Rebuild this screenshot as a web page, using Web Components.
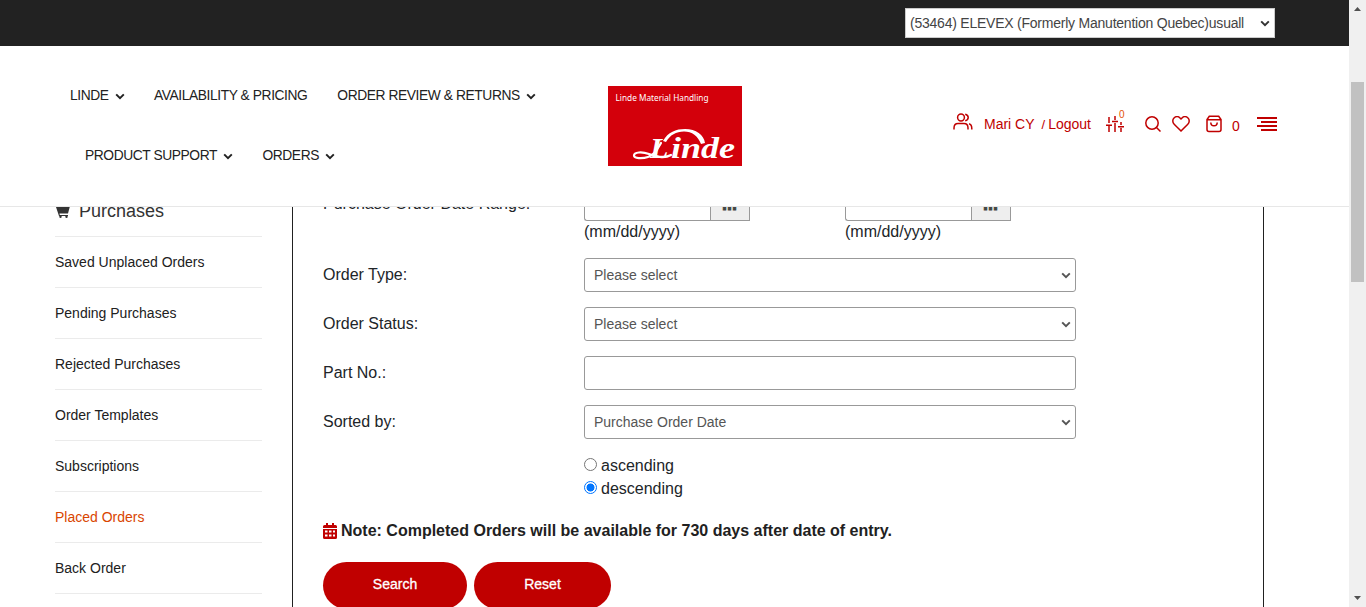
<!DOCTYPE html>
<html lang="en">
<head>
<meta charset="utf-8">
<title>Placed Orders</title>
<style>
html,body{margin:0;height:100%;overflow:hidden;background:#fff}
body{font-family:"Liberation Sans",Arial,sans-serif;color:#212529}
</style>
</head>
<body>
<order-page></order-page>
<script>
const define = (name, markup, setup) => customElements.define(name, class extends HTMLElement {
  constructor() {
    super();
    const t = document.createElement('template');
    t.innerHTML = markup;
    this.attachShadow({ mode: 'open' }).append(t.content.cloneNode(true));
    if (setup) setup(this, this.shadowRoot);
  }
});

define('chevron-icon', `
<style>:host{display:block;flex:none;width:10px;height:7px}svg{display:block}</style>
<svg width="10" height="7" viewBox="0 0 10 7"><path d="M1.2 1.4 5 5.1 8.8 1.4" fill="none" stroke="currentColor" stroke-width="2"/></svg>`);

define('top-bar', `
<style>
:host{display:flex;justify-content:flex-end;align-items:flex-start;height:46px;background:#222;padding:8px 74px 0 0;box-sizing:border-box}
.sel{display:flex;align-items:center;justify-content:space-between;width:370px;height:30px;box-sizing:border-box;border:1px solid #ccc;background:#fff;color:#444;font-size:14px;letter-spacing:-.23px;padding:0 4px;white-space:nowrap}
chevron-icon{color:#333}
</style>
<div class="sel"><span>(53464) ELEVEX (Formerly Manutention Quebec)usuall</span><chevron-icon></chevron-icon></div>`);

define('nav-item', `
<style>
:host{display:flex;align-items:center;height:60px;padding:0 15px;font-size:13.800px;letter-spacing:-.420px;color:#222;white-space:nowrap}
chevron-icon{margin:2px 0 0 6px;width:9.500px}
:host([plain]) chevron-icon{display:none}
</style><slot></slot><chevron-icon></chevron-icon>`);

define('brand-logo', `
<style>:host{display:block;width:134px;height:80px}svg{display:block}</style>
<svg width="134" height="80" viewBox="0 0 134 80">
<rect width="134" height="80" fill="#d3000b"/>
<text x="7.500" y="15" font-family="Noto Sans,sans-serif" font-size="9.500" fill="#fff" textLength="93" lengthAdjust="spacingAndGlyphs">Linde Material Handling</text>
<text y="72" font-family="Liberation Serif,serif" font-weight="bold" font-style="italic" font-size="30" fill="#fff"><tspan x="42">L</tspan><tspan x="63" textLength="64" lengthAdjust="spacingAndGlyphs">inde</tspan></text>
<path d="M55 55C60 46 68 43 77 43C88 43 96 49 97 57L93 58C90 50 84 45.500 76 45.500C68 45.500 62 49 58 56Z" fill="#fff"/>
<path d="M53 57C49 64 46 69 40 71C34 73 26 72.500 26 69.500C26 66 34 65.500 41 68C48 70.500 56 73 63 69" fill="none" stroke="#fff" stroke-width="2.200" stroke-linecap="round"/>
</svg>`);

define('user-tools', `
<style>
:host{display:block;width:325px;height:160px;color:#c00000;font-size:14px}
.row{display:flex;align-items:center;height:156px}
svg{display:block;flex:none;fill:none;stroke:currentColor;stroke-width:1.500}
.people{margin:-5px 11px 0 -1px}.name{margin-right:7px}.slash{font-size:13px;margin-right:3px}
.compare{position:relative;margin-left:15px}.compare span{position:absolute;left:13px;top:-7px;font-size:10px;line-height:12px;color:#e35205}
.find{margin-left:21px}.heart{margin-left:11px}.bag{margin-left:16px}.count{margin:4px 17px 0 10px}
</style>
<div class="row">
<svg class="people" width="20" height="18" viewBox="0 0 20 18"><circle cx="8" cy="4.500" r="3.400"/><path d="M1 16.500V15q0-4.500 4-4.500h6q4 0 4 4.500v1.500M12.200 1.200c4 .9 4 5.700 0 6.600M16 10.800q2.800.8 2.800 4.700v1"/></svg>
<span class="name">Mari CY</span><span class="slash">/</span><span>Logout</span>
<span class="compare"><svg width="18" height="16" viewBox="0 0 18 16"><path d="M3 1v6M3 10v6M0 9.200h6M9 0v4M9 7v9M6 5.500h6M15 6v3M15 12v4M12 10.800h6"/></svg><span>0</span></span>
<svg class="find" width="16" height="16" viewBox="0 0 16 16"><circle cx="7" cy="7" r="6.200"/><path d="m11.500 11.500 4 4"/></svg>
<svg class="heart" width="18" height="16" viewBox="0 0 18 16"><path d="m9 15-6.800-6.800C.3 6.300.4 3.500 2 2 4 .2 6.500.5 8 2l1 1 1-1c1.500-1.500 4-1.800 6 0 1.600 1.500 1.700 4.300-.2 6.200Z"/></svg>
<svg class="bag" width="16" height="18" viewBox="0 0 16 18"><path d="M3.300 1.200h9.400L15 4.500v10q0 2-2 2H3q-2 0-2-2v-10ZM1 4.800h14M4.800 7.500q0 3.300 3.200 3.300t3.200-3.300"/></svg>
<span class="count">0</span>
<svg width="20" height="14" viewBox="0 0 20 14" style="stroke-width:2"><path d="M0 1h20M4 5h16M0 9h20M4 13h16"/></svg>
</div>`);

define('site-header', `
<style>
:host{display:grid;grid-template-columns:553px 187px 1fr;height:161px;box-sizing:border-box;border-bottom:1px solid #e7e7e7;padding-left:55px;background:#fff}
nav{padding-top:19px}.r{display:flex}.r+.r{padding-left:15px}
brand-logo{margin-top:40px}
.tools{padding-left:159px}
</style>
<nav><div class="r"><nav-item>LINDE</nav-item><nav-item plain>AVAILABILITY &amp; PRICING</nav-item><nav-item>ORDER REVIEW &amp; RETURNS</nav-item></div>
<div class="r"><nav-item>PRODUCT SUPPORT</nav-item><nav-item>ORDERS</nav-item></div></nav>
<brand-logo></brand-logo>
<div class="tools"><user-tools></user-tools></div>`);

define('side-link', `
<style>:host{display:block;height:50px;line-height:50px;border-bottom:1px solid #ebebeb;font-size:14px;color:#212121}
:host([active]){color:#d94500}</style><slot></slot>`);

define('side-menu', `
<style>:host{display:block;width:207px}
h2{display:flex;align-items:center;margin:-21px 0 0;height:50px;border-bottom:1px solid #ebebeb;font-size:18px;font-weight:400;color:#333}
svg{display:block;margin-right:9px}</style>
<h2><svg width="15" height="14" viewBox="0 0 15 14"><path d="M0 0h3l.5 2H15l-2 7.500H4.500l.3 1.500H13v1H4Z" fill="#333"/><circle cx="5.500" cy="12.800" r="1.200" fill="#333"/><circle cx="11.500" cy="12.800" r="1.200" fill="#333"/></svg>Purchases</h2>
<side-link>Saved Unplaced Orders</side-link><side-link>Pending Purchases</side-link><side-link>Rejected Purchases</side-link><side-link>Order Templates</side-link><side-link>Subscriptions</side-link><side-link active>Placed Orders</side-link><side-link>Back Order</side-link>`);

define('form-row', `
<style>:host{display:grid;grid-template-columns:261px 492px;margin-bottom:15px;font-size:16px}
.l{line-height:33px}</style><div class="l"></div><slot></slot>`, (h, r) => { r.querySelector('.l').textContent = h.getAttribute('label'); });

define('field-box', `
<style>:host{display:flex;align-items:center;justify-content:space-between;height:34px;box-sizing:border-box;border:1px solid #999;border-radius:3px;background:#fff;font-size:14px;color:#555;padding:0 4px 0 9px}
:host([empty]) chevron-icon{display:none}</style><span><slot></slot></span><chevron-icon></chevron-icon>`);

define('date-field', `
<style>:host{display:block;flex:none;width:261px;font-size:16px}
.g{display:flex;height:34px}.i{width:126px;box-sizing:border-box;border:1px solid #999;border-right:0;border-radius:3px 0 0 3px}
.b{width:40px;box-sizing:border-box;border:1px solid #999;background:#eee;color:#444;font-weight:bold;font-size:18px;line-height:33px;text-align:center;text-indent:-1px;-webkit-text-stroke:.8px #444}
.h{line-height:22px}</style>
<div class="g"><div class="i"></div><div class="b">...</div></div><div class="h">(mm/dd/yyyy)</div>`);

define('radio-option', `
<style>:host{display:flex;align-items:center;height:23px;font-size:16px}
i{width:13px;height:13px;box-sizing:border-box;border:1px solid #767676;border-radius:50%;margin:-2px 4px 0 0}
:host([checked]) i{border-color:#0075ff;background:radial-gradient(circle,#0075ff 3.700px,#fff 4.300px)}</style><i></i><slot></slot>`);

define('pill-button', `
<style>:host{display:block;box-sizing:border-box;height:47px;line-height:45px;border-radius:25px;background:#c00000;color:#fff;font-size:14px;-webkit-text-stroke:.3px #fff;text-align:center}</style><slot></slot>`);

define('order-search', `
<style>:host{display:block;box-sizing:border-box;width:972px;height:400px;border:solid #212121;border-width:0 1px;padding-left:30px}
.rows{margin-top:-20px}.dates{display:flex}.radios{padding:0 0 0 261px}
.note{display:flex;align-items:center;margin-top:21px;height:20px;font-size:16px;font-weight:bold;color:#212121}
.note svg{display:block;margin-right:4px}
.buttons{display:flex;gap:7px;margin-top:21px}</style>
<div class="rows">
<form-row label="Purchase Order Date Range:"><div class="dates"><date-field></date-field><date-field></date-field></div></form-row>
<form-row label="Order Type:"><field-box>Please select</field-box></form-row>
<form-row label="Order Status:"><field-box>Please select</field-box></form-row>
<form-row label="Part No.:"><field-box empty></field-box></form-row>
<form-row label="Sorted by:"><field-box>Purchase Order Date</field-box></form-row>
<div class="radios"><radio-option>ascending</radio-option><radio-option checked>descending</radio-option></div>
<div class="note"><svg width="14" height="16" viewBox="0 0 14 16"><path d="M3 0h2v2h4V0h2v2h1.500Q14 2 14 3.500V5H0V3.500Q0 2 1.500 2H3Z" fill="#c00000"/><path d="M0 6h14v8.500q0 1.500-1.500 1.500h-11Q0 16 0 14.500ZM2 7.500v2h2.500v-2Zm4 0v2h2.500v-2Zm4 0v2h2v-2ZM2 11.500v2h2.500v-2Zm4 0v2h2.500v-2Zm4 0v2h2v-2Z" fill="#c00000" fill-rule="evenodd"/></svg>Note: Completed Orders will be available for 730 days after date of entry.</div>
<div class="buttons"><pill-button style="width:144px">Search</pill-button><pill-button style="width:137px">Reset</pill-button></div>
</div>`);

define('scroll-rail', `
<style>:host{display:flex;flex-direction:column;align-items:center;box-sizing:border-box;height:607px;background:#f0f0f0;padding:7px 0 7px}
svg{display:block;fill:#505050}.t{width:13px;height:200px;background:#c1c1c1;margin:71px 0 auto}</style>
<svg width="7" height="4"><path d="M3.500 0 7 4H0Z"/></svg><div class="t"></div><svg width="7" height="4"><path d="M0 0h7L3.500 4Z"/></svg>`);

define('order-page', `
<style>:host{display:grid;grid-template-columns:1349px 17px;width:1366px;height:607px;overflow:hidden}
.main{display:flex;align-items:flex-start;gap:30px;height:400px;overflow:hidden;padding-left:55px}</style>
<div><top-bar></top-bar><site-header></site-header><div class="main"><side-menu></side-menu><order-search></order-search></div></div>
<scroll-rail></scroll-rail>`);
</script>
</body>
</html>
